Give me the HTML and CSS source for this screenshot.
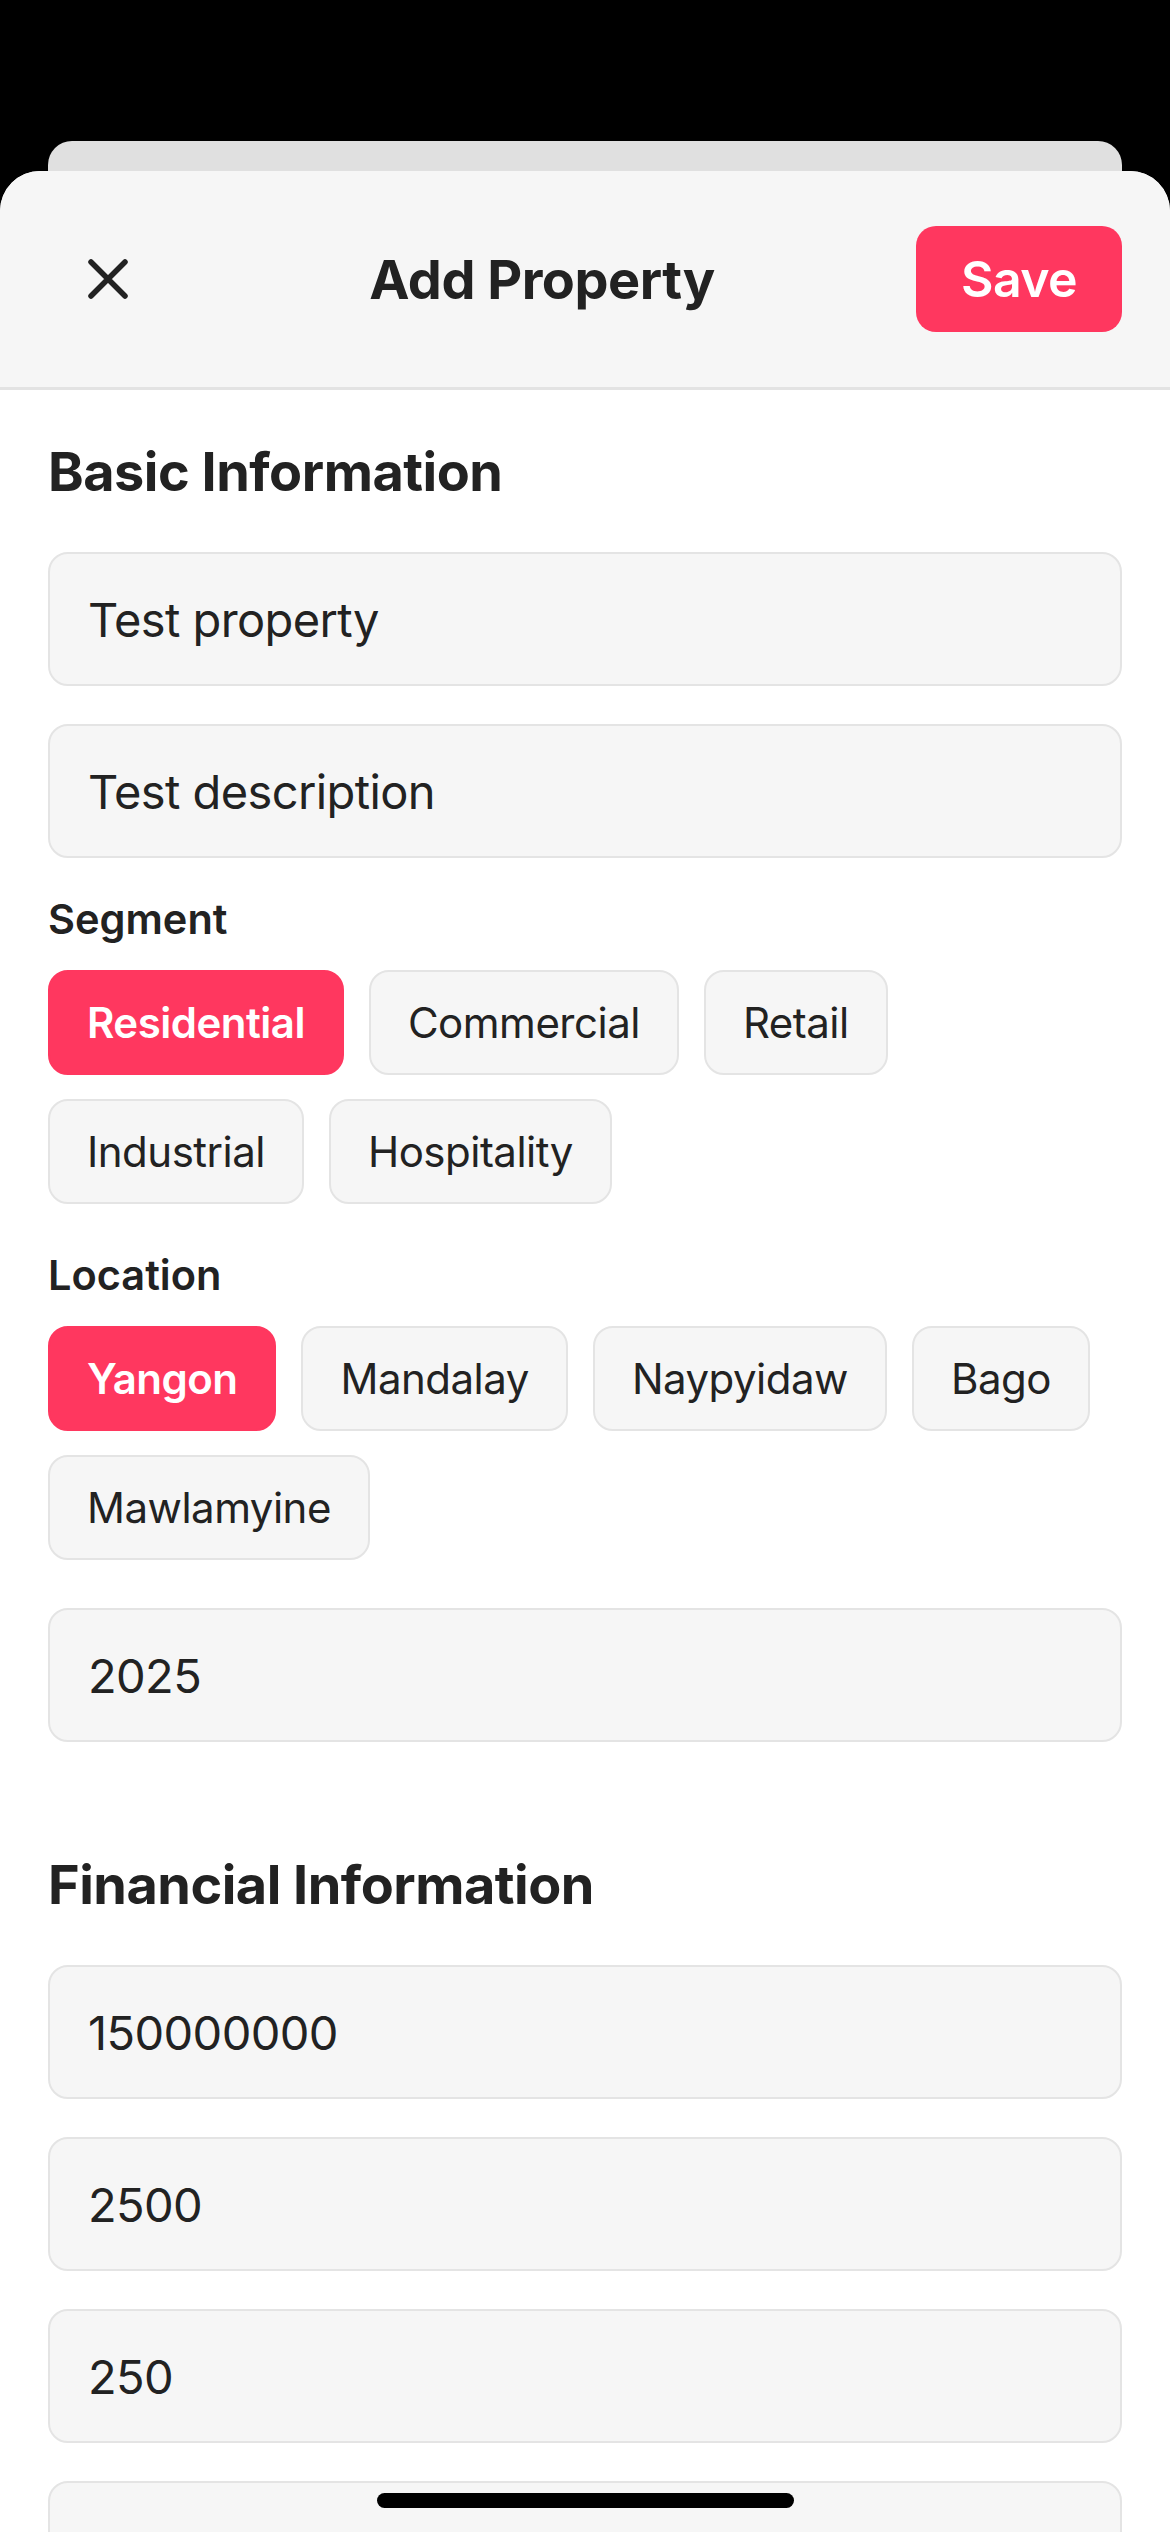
FILE: index.html
```html
<!DOCTYPE html>
<html lang="en">
<head>
<meta charset="utf-8">
<title>Add Property</title>
<link rel="stylesheet" href="styles.css">
</head>
<body>
<div class="backdrop">
  <div class="back-card"></div>
</div>
<div class="sheet">
  <header class="sheet-header">
    <button class="close-btn" aria-label="Close">
      <svg width="40" height="40" viewBox="0 0 40 40" fill="none" stroke="#222" stroke-width="5.5" stroke-linecap="round">
        <path d="M3 3 L37 37 M37 3 L3 37"/>
      </svg>
    </button>
    <h1 class="sheet-title">Add Property</h1>
    <button class="save-btn">Save</button>
  </header>
  <main class="content">
    <section class="section">
      <h2 class="section-title">Basic Information</h2>
      <div class="field">Test property</div>
      <div class="field">Test description</div>
      <div class="group">
        <div class="group-label">Segment</div>
        <div class="chips">
          <span class="chip chip-active">Residential</span>
          <span class="chip">Commercial</span>
          <span class="chip">Retail</span>
          <span class="chip">Industrial</span>
          <span class="chip">Hospitality</span>
        </div>
      </div>
      <div class="group">
        <div class="group-label">Location</div>
        <div class="chips">
          <span class="chip chip-active">Yangon</span>
          <span class="chip">Mandalay</span>
          <span class="chip">Naypyidaw</span>
          <span class="chip">Bago</span>
          <span class="chip">Mawlamyine</span>
        </div>
      </div>
      <div class="field">2025</div>
    </section>
    <section class="section section-next">
      <h2 class="section-title">Financial Information</h2>
      <div class="field">150000000</div>
      <div class="field">2500</div>
      <div class="field">250</div>
      <div class="field"></div>
    </section>
  </main>
</div>
<div class="home-indicator"></div>
</body>
</html>
```
FILE: styles.css
```css
* { box-sizing: border-box; }
html, body {
  margin: 0;
  padding: 0;
  background: #000;
  height: 2532px;
  overflow: hidden;
  font-family: Inter, "Noto Sans", "Liberation Sans", sans-serif;
  color: #222;
}
.backdrop {
  padding-top: 141px;
}
.back-card {
  margin: 0 48px;
  height: 30px;
  background: #e0e0e0;
  border-radius: 24px 24px 0 0;
}
.sheet {
  background: #fff;
  border-radius: 40px 40px 0 0;
  overflow: hidden;
  height: 2361px;
}
.sheet-header {
  height: 219px;
  background: #f6f6f6;
  border-bottom: 3px solid #e3e3e3;
  display: flex;
  align-items: center;
  padding: 0 48px;
}
.close-btn {
  width: 120px;
  height: 106px;
  border: 0;
  background: transparent;
  padding: 0;
  display: flex;
  align-items: center;
  justify-content: center;
}
.sheet-title {
  flex: 1;
  margin: 0;
  text-align: center;
  font-size: 54px;
  font-weight: 700;
  letter-spacing: -0.5px;
  line-height: 65px;
  color: #222;
}
.save-btn {
  width: 206px;
  height: 106px;
  border: 0;
  border-radius: 20px;
  background: #ff375f;
  color: #fff;
  font-family: inherit;
  font-size: 50px;
  font-weight: 600;
  letter-spacing: -0.6px;
  padding: 0;
}
.content {
  padding: 49px 48px 0;
}
.section-title {
  margin: 0 0 48px;
  font-size: 54px;
  font-weight: 700;
  line-height: 65px;
  letter-spacing: -0.5px;
  color: #222;
}
.section-next {
  margin-top: 110px;
}
.field {
  height: 134px;
  background: #f6f6f6;
  border: 2px solid #e4e4e4;
  border-radius: 20px;
  display: flex;
  align-items: center;
  padding: 0 38px;
  font-size: 47px;
  line-height: 57px;
  letter-spacing: -0.6px;
  margin-bottom: 38px;
  color: #222;
}
.group {
  margin-bottom: 48px;
}
.group-label {
  font-size: 41.5px;
  font-weight: 600;
  line-height: 48px;
  margin-bottom: 27px;
  margin-top: -1px;
}
.chips {
  display: flex;
  flex-wrap: wrap;
  column-gap: 25px;
  row-gap: 24px;
}
.chip {
  height: 105px;
  display: inline-flex;
  align-items: center;
  padding: 0 37px;
  border: 2px solid #e4e4e4;
  background: #f6f6f6;
  border-radius: 20px;
  font-size: 42px;
  line-height: 50px;
  letter-spacing: -0.5px;
  color: #222;
}
.chip-active {
  background: #ff375f;
  border-color: #ff375f;
  color: #fff;
  font-weight: 600;
  letter-spacing: -0.5px;
}
.home-indicator {
  position: fixed;
  left: 377px;
  top: 2493px;
  width: 417px;
  height: 15px;
  border-radius: 8px;
  background: #000;
}
```
